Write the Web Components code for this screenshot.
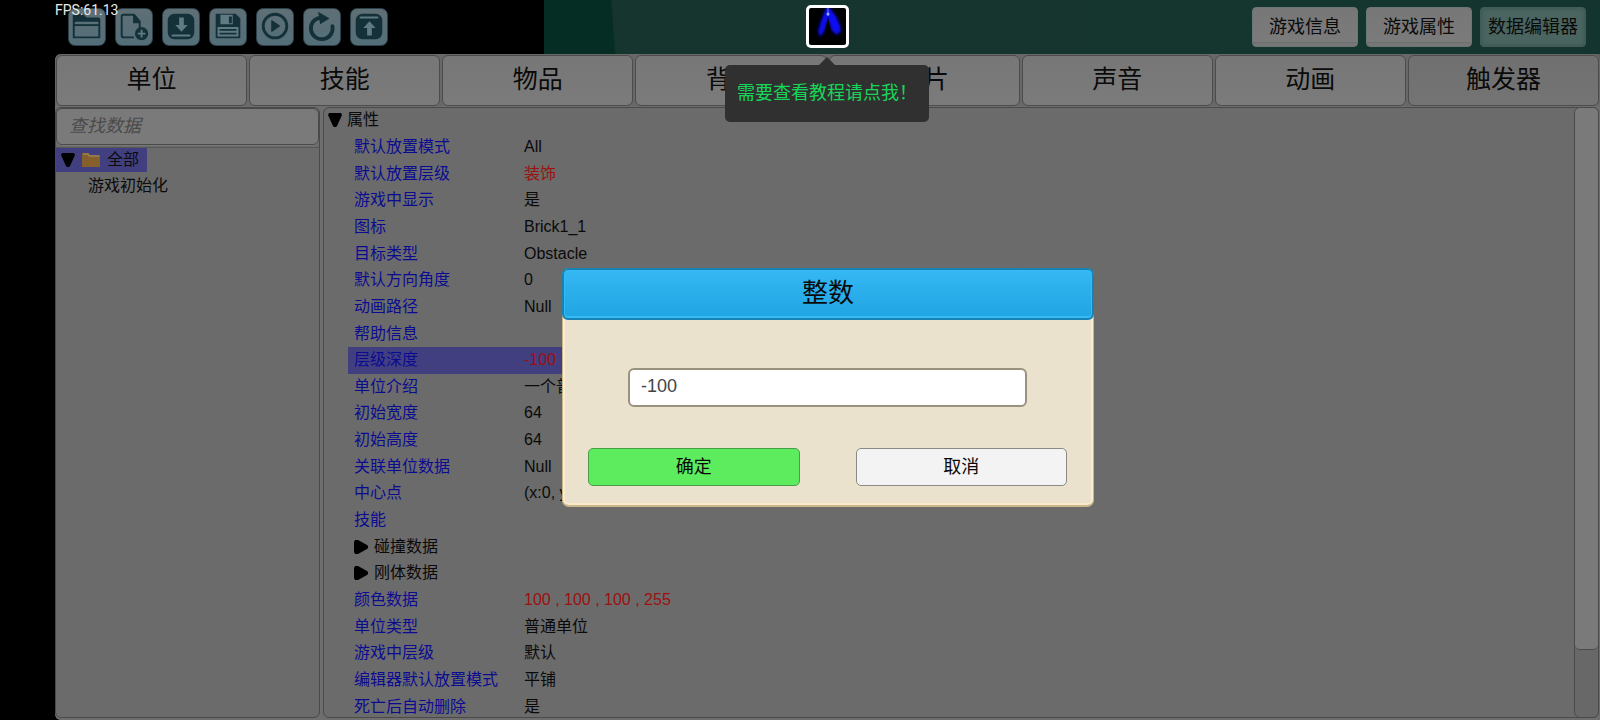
<!DOCTYPE html>
<html lang="zh-CN">
<head>
<meta charset="utf-8">
<title>数据编辑器</title>
<style>
html, body { margin: 0; height: 100%; background: #000; }
body { font: 16px/24px "Liberation Sans", "Noto Sans CJK SC", sans-serif; color: #0a0a0a; }
</style>
</head>
<body>
<data-editor-app></data-editor-app>
<script>
const BASE = `*,*::before,*::after{box-sizing:border-box}button,input{font:inherit;color:inherit;margin:0}`;
function define(name, css, html) {
  customElements.define(name, class extends HTMLElement {
    constructor() {
      super();
      this.attachShadow({ mode: 'open' });
    }
    connectedCallback() {
      const body = typeof html === 'function' ? html(this) : html;
      this.shadowRoot.innerHTML = `<style>${BASE}${css}</style>${body}`;
    }
  });
}

const ICONS = {
  open: ['打开', '<path d="M6 30V7q0-1 1-1h8l4 4h13q1 0 1 1v19z" fill="none" stroke="#143039" stroke-width="2"/><path d="M6 6h9l4 4h14v4H6z" fill="#143039"/><path d="M8 14h24" stroke="#5f7a83" stroke-width="1"/><path d="M6 17h27" stroke="#143039" stroke-width="2"/>'],
  add: ['新建', '<path d="M20 30H9q-2 0-2-2V8q0-2 2-2h11l6 7v7" fill="none" stroke="#143039" stroke-width="2"/><path d="M19 5v10h8z" fill="#143039"/><circle cx="28" cy="26" r="7" fill="#143039"/><path d="M28 22v8M24 26h8" stroke="#5f7a83" stroke-width="2"/>'],
  down: ['导入', '<rect x="6" y="5" width="28" height="27" rx="7" fill="#143039"/><path d="M18 9h5v8h4l-6.500 7-6.500-7h4z" fill="#5f7a83"/><path d="M11 28h18" stroke="#5f7a83" stroke-width="2" stroke-linecap="round"/>'],
  save: ['保存', '<path d="M7 5h21l5 5v21H7z" fill="#143039"/><path d="M12 6h13v10H12zM9 19h22v10H9z" fill="#5f7a83"/><path d="M21 8h3v7h-3zM11 21h18v2H11zM11 25h18v2H11z" fill="#143039"/>'],
  play: ['运行', '<circle cx="20" cy="18" r="12.500" fill="none" stroke="#143039" stroke-width="3"/><path d="M16 12.500v11q0 1 1 .5l8-5.500q1-.5 0-1l-8-5.500q-1-.5-1 .5z" fill="#143039"/>'],
  redo: ['刷新', '<path d="M18 9A11.500 11.500 0 1 0 31 18" fill="none" stroke="#143039" stroke-width="4" stroke-linecap="round"/><path d="M16 3l12 7-10 6z" fill="#143039"/>'],
  up: ['导出', '<rect x="6" y="5" width="28" height="27" rx="7" fill="#143039"/><path d="M18 28h5v-8h4l-6.500-7-6.500 7h4z" fill="#5f7a83"/><path d="M11 9h18" stroke="#5f7a83" stroke-width="2" stroke-linecap="round"/>']
};

define('tool-button', `
:host{display:block;width:38px;height:38px}
button{display:block;width:100%;height:100%;padding:0;border:1px solid #2c4149;border-radius:7px;background:linear-gradient(#5f6f75,#536e78)}
svg{display:block;width:100%;height:100%}`,
  el => { const [label, art] = ICONS[el.getAttribute('icon')];
    return `<button aria-label="${label}"><svg viewBox="1 0 38 38" aria-hidden="true">${art}</svg></button>`; });

define('mode-button', `
:host{display:block;width:106px;height:40px}
button{width:100%;height:100%;padding:0;border:1px solid #6d7675;border-radius:4px;background:linear-gradient(#777,#7b7b7b 90%,#6c6c6c 90%,#777 94%);font-size:18px;white-space:nowrap}
:host([active]) button{background:#4a6560;border-color:#425b56;box-shadow:inset 0 0 4px #36504b}`,
  `<button><slot></slot></button>`);

define('category-tab', `
:host{display:block;flex:1 1 0;min-width:0}
button{display:block;width:100%;height:51px;padding:0 0 3px;border:1px solid #4c4c4c;border-radius:6px;background:linear-gradient(#777,#7b7b7b);font-size:25px;white-space:nowrap}
:host([active]) button{background:linear-gradient(#707070,#747474)}`,
  `<button><slot></slot></button>`);

define('top-bar', `
:host{display:flex;height:54px;background:#000;position:relative}
.tools{display:flex;gap:9px;flex:0 0 34%;padding:8px 0 0 68px}
.scene{flex:1;display:flex;justify-content:flex-end;gap:8px;padding:7px 14px 0 0;background:linear-gradient(86deg,#062d23 0 70px,#16352f 72px 480px,#14352f)}
.fps{position:absolute;left:55px;top:2px;font:14px/16px Roboto,sans-serif;color:#e8e8e8}`,
  `<div class="tools">${Object.keys(ICONS).map(k => `<tool-button icon="${k}"></tool-button>`).join('')}</div>
   <div class="scene"><mode-button>游戏信息</mode-button><mode-button>游戏属性</mode-button><mode-button active>数据编辑器</mode-button></div>
   <span class="fps">FPS:61.13</span>`);

define('category-tabs', `
:host{display:flex;gap:2px;padding:1px 1px 0;background:#686868;border-radius:6px 6px 0 0}`,
  ['单位', '技能', '物品', '背景', '图片', '声音', '动画', '触发器'].map((t, i) => `<category-tab ${i === 7 ? 'active' : ''}>${t}</category-tab>`).join(''));

define('data-tree', `
:host{display:flex;flex-direction:column;width:265px;border:1px solid #4a4a4a;border-radius:6px;background:#6b6b6b;overflow:hidden}
input{display:block;width:100%;height:37px;padding:0 12px;border:1px solid #4a4a4a;border-radius:6px;background:#7a7a7a;outline:0;box-shadow:0 1px #777;font-size:18px}
input::placeholder{color:#4a4a4a;font-style:italic;opacity:1}
ul{list-style:none;margin:0;padding:0}
.tree{margin-top:2px;border-top:1px solid #575757}
.root{display:flex;align-items:center;width:91px;height:24px;padding-left:5px;background:#423f80}
.root svg{margin-right:7px}
.leaf{height:28px;line-height:28px;padding-left:32px}`,
  `<input type="search" aria-label="查找数据" placeholder="查找数据">
   <ul class="tree"><li><div class="root"><svg width="14" height="14" viewBox="0 0 14 14"><path d="M1 0h12l1 2-5 11-1 1H6l-1-1L0 2z"/></svg>
   <svg width="18" height="16" viewBox="0 0 18 16"><path d="M0 1h7l1 2h10v12H0z" fill="#85602c"/><path d="M1 2h5l1 2h10" fill="none" stroke="#a58f70"/></svg>全部</div>
   <ul><li class="leaf">游戏初始化</li></ul></li></ul>`);

const ROWS = [
  ['默认放置模式', 'All'], ['默认放置层级', '装饰', 'red'], ['游戏中显示', '是'], ['图标', 'Brick1_1'],
  ['目标类型', 'Obstacle'], ['默认方向角度', '0'], ['动画路径', 'Null'], ['帮助信息', ''],
  ['层级深度', '-100', 'red sel'], ['单位介绍', '一个普通'], ['初始宽度', '64'], ['初始高度', '64'],
  ['关联单位数据', 'Null'], ['中心点', '(x:0, y:0)'], ['技能', ''], ['碰撞数据', '', 'group'], ['刚体数据', '', 'group'],
  ['颜色数据', '100 , 100 , 100 , 255', 'red'], ['单位类型', '普通单位'], ['游戏中层级', '默认'],
  ['编辑器默认放置模式', '平铺'], ['死亡后自动删除', '是']
];
define('property-table', `
:host{display:flex;flex:1;min-width:0;position:relative}
:host::before{content:"";position:absolute;inset:1px 0 2px;border:1px solid #4a4a4a;border-radius:6px;background:#6b6b6b}
table{position:relative;flex:1;display:grid;grid-template-rows:1fr 22fr;padding:1px 0 0 5px}
caption{display:flex;align-items:center;gap:5px}
tbody{display:grid;grid-auto-rows:1fr;padding-left:20px}
tr{display:grid;grid-template-columns:170px auto;justify-self:start;align-items:center;padding-left:6px}
th,td{padding:0;font-weight:400;text-align:left;white-space:nowrap}
th{color:#0b0b92}
.red td{color:#9c1010}
.sel{background:#423f80;width:240px}
.group th{color:#0a0a0a;display:flex;align-items:center;gap:6px}
.bar{position:relative;width:25px;margin:1px 0 2px;border:1px solid #4a4a4a;border-radius:6px;background:#686868}
.bar i{display:block;height:89%;border-bottom:1px solid #4a4a4a;border-radius:5px;background:#7a7a7a}`,
  `<table><caption><svg width="14" height="14" viewBox="0 0 14 14"><path d="M1 0h12l1 2-5 11-1 1H6l-1-1L0 2z"/></svg>属性</caption><tbody>${
    ROWS.map(([k, v, c = '']) => `<tr class="${c}"><th scope="row">${c === 'group' ? '<svg width="14" height="14" viewBox="0 0 14 14"><path d="M1 0h3l9 5 1 1v2l-1 1-9 5H1L0 12V2z"/></svg>' : ''}${k}</th><td>${v}</td></tr>`).join('')
  }</tbody></table><div class="bar"><i></i></div>`);

define('tutorial-hint', `
:host{position:absolute;left:calc(50% + 27px);top:5px;width:204px;transform:translateX(-50%);display:flex;flex-direction:column;align-items:center}
button{width:43px;height:43px;padding:0;border:3px solid #fff;border-radius:5px;background:#000;overflow:hidden}
button svg{display:block;width:100%;height:100%}
.arrow{width:16px;height:8px;margin-top:9px;background:#303030;clip-path:polygon(50% 0,100% 100%,0 100%)}
p{margin:0;width:100%;height:57px;border-radius:5px;background:#303030;color:#18d65a;font-size:18px;line-height:56px;text-align:center;white-space:nowrap}`,
  `<button aria-label="教程"><svg viewBox="0 0 37 37"><defs><filter id="g" x="-50%" y="-50%" width="200%" height="200%"><feGaussianBlur stdDeviation="1.8"/></filter></defs>
   <path d="M17 0h4l6 8 4 9 1 6-4 4-5-4-4-11-4 12-4 5-2-6 3-10z" fill="#0a0af5" filter="url(#g)"/><path d="M19 8l4 24h-8z" fill="#000"/><path d="M19 0v8" stroke="#6a7cff" stroke-width="1"/><circle cx="19" cy="6" r="1.500" fill="#9aaaff"/></svg></button>
   <div class="arrow"></div><p>需要查看教程请点我！</p>`);

define('integer-dialog', `
:host{position:absolute;left:calc(50% + 28px);top:268px;width:532px;transform:translateX(-50%)}
.box{border:1px solid #c9b78b;border-bottom-width:2px;border-radius:7px;background:#eae2cd;box-shadow:inset 0 0 0 2px #f9ebcb}
h2{margin:-1px -1px 0;height:52px;border:2px solid #1783b4;border-radius:6px;background:linear-gradient(#35b8f4,#1fa5e2);box-shadow:inset 0 -2px #35baf2,inset 1px 0 #35baf2,inset -1px 0 #35baf2;font-size:26px;font-weight:400;line-height:46px;text-align:center}
form{display:grid;grid-template-columns:1fr 1fr;column-gap:56px;row-gap:41px;padding:48px 26px 19px 25px}
input{grid-column:1/-1;justify-self:center;width:399px;height:39px;padding:0 11px 2px;border:2px solid #99927f;border-radius:6px;background:#fff;color:#444;font-size:18px;outline:0}
button{height:38px;padding:0;border:1px solid #8b8b85;border-radius:5px;background:#f3f3f3;color:#0a0a0a;font-size:18px}
.ok{background:#5dec5d;border-color:#4b9e49}`,
  `<div class="box" role="dialog" aria-labelledby="t"><h2 id="t">整数</h2>
   <form><input type="text" inputmode="numeric" aria-labelledby="t" value="-100"><button type="button" class="ok">确定</button><button type="button">取消</button></form></div>`);

define('data-editor-app', `
:host{position:relative;display:flex;flex-direction:column;min-height:100vh;overflow:hidden}
main{flex:1;display:flex;flex-direction:column;margin-left:55px;background:#5c5c5c;border-radius:6px 0 0 6px}
.panels{flex:1;display:flex;gap:3px;padding-right:1px;background:#6e6e6e;border-radius:0 0 0 6px}
data-tree{margin:1px 0 2px}`,
  `<top-bar></top-bar><main><category-tabs></category-tabs><div class="panels"><data-tree></data-tree><property-table></property-table></div></main>
   <tutorial-hint></tutorial-hint><integer-dialog></integer-dialog>`);
</script>
</body>
</html>
